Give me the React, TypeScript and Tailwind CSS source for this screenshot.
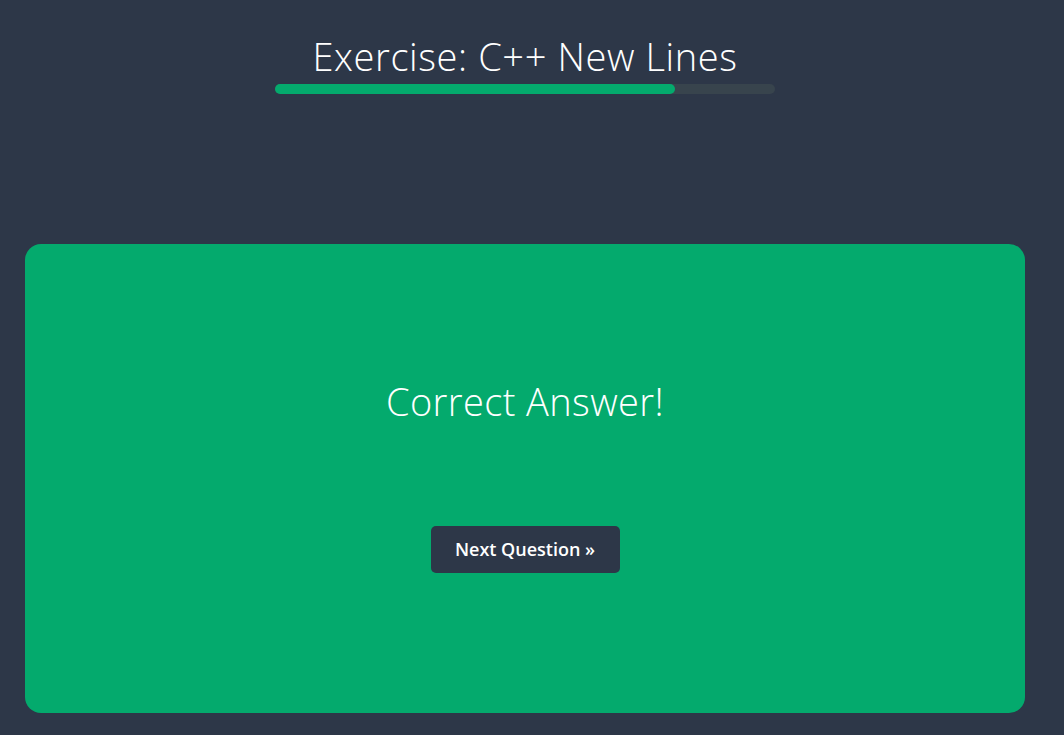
import React from 'react';

const App = () => {
  const progress = 80;

  return (
    <div className="min-h-[735px] w-full bg-[#2d3748] text-white" style={{ fontFamily: '"Open Sans", "Noto Sans", sans-serif' }}>
      <div className="ml-[25px] w-[1000px] pt-[32px]">
        <div className="flex flex-col items-center">
          <h1 className="text-[38px] font-light leading-[48px] tracking-[0.6px]">Exercise: C++ New Lines</h1>
          <div className="mt-[4px] h-[10px] w-[500px] rounded-full bg-[#38444d]">
            <div className="h-full rounded-full bg-[#04aa6d]" style={{ width: `${progress}%` }} />
          </div>
        </div>

        <div className="mt-[150px] flex h-[469px] flex-col items-center rounded-[16px] bg-[#04aa6d]">
          <p className="mt-[132px] text-[38px] font-light leading-[50px] tracking-[0.4px]">Correct Answer!</p>
          <button className="mt-[100px] h-[47px] w-[189px] rounded-[5px] bg-[#2d3748] text-[18px] font-semibold">
            Next Question »
          </button>
        </div>
      </div>
    </div>
  );
};

export default App;
